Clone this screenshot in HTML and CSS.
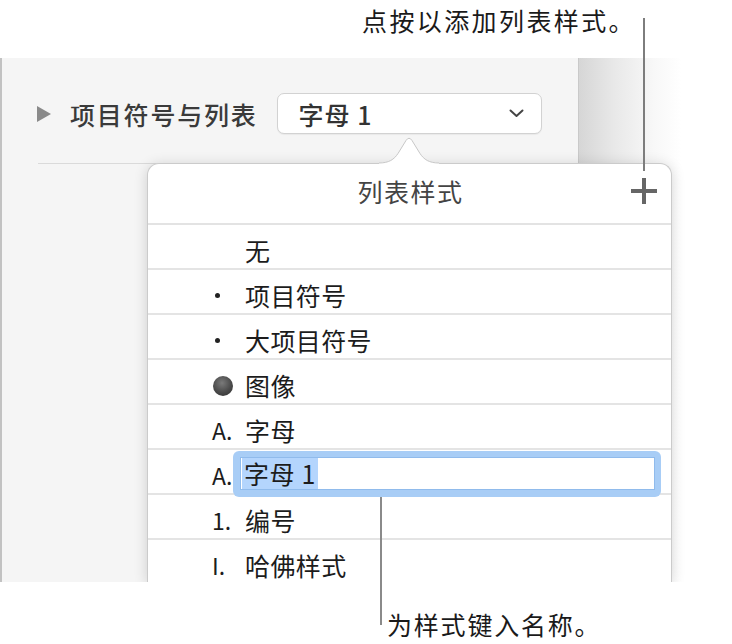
FILE: index.html
```html
<!DOCTYPE html>
<html lang="zh-CN">
<head>
<meta charset="utf-8">
<title>列表样式</title>
<link rel="stylesheet" href="styles.css">
</head>
<body>
<div class="page">
  <div class="top-note">点按以添加列表样式。</div>
  <div class="stage">
    <div class="sidebar">
      <div class="section-row">
        <span class="disclosure"></span>
        <span class="section-label">项目符号与列表</span>
        <div class="dropdown">
          <span class="dropdown-text">字母 1</span>
          <svg class="chevron" width="15" height="9" viewBox="0 0 15 9"><polyline points="1.5,1.5 7.5,7 13.5,1.5" fill="none" stroke="#444" stroke-width="2" stroke-linecap="round" stroke-linejoin="round"/></svg>
        </div>
      </div>
      <div class="divider"></div>
    </div>
    <div class="canvas"></div>
  </div>
  <div class="bottom-note">为样式键入名称。</div>

  <div class="popup">
    <div class="popup-header">
      <span></span>
      <span class="popup-title">列表样式</span>
      <svg class="plus" width="26" height="26" viewBox="0 0 26 26"><rect x="0" y="11" width="26" height="4" fill="#666"/><rect x="11" y="0" width="4" height="26" fill="#666"/></svg>
    </div>
    <div class="row"><span class="marker"></span><span class="name">无</span></div>
    <div class="row"><span class="marker"><span class="dot"></span></span><span class="name">项目符号</span></div>
    <div class="row"><span class="marker"><span class="dot"></span></span><span class="name">大项目符号</span></div>
    <div class="row"><span class="marker"><span class="image-bullet"></span></span><span class="name">图像</span></div>
    <div class="row"><span class="marker">A.</span><span class="name">字母</span></div>
    <div class="row editing">
      <span class="marker">A.</span>
      <div class="field"><div class="field-inner"><span class="selected">字母 1</span></div></div>
    </div>
    <div class="row"><span class="marker">1.</span><span class="name">编号</span></div>
    <div class="row"><span class="marker">I.</span><span class="name">哈佛样式</span></div>
  </div>

  <svg class="pointer" width="60" height="29" viewBox="0 0 60 29">
    <path d="M0,28 C10,28 15,24.5 19,18.5 L27,5.5 Q30,1 33,5.5 L41,18.5 C45,24.5 50,28 60,28 L60,29 L0,29 Z" fill="#fff"/>
    <path d="M0,28 C10,28 15,24.5 19,18.5 L27,5.5 Q30,1 33,5.5 L41,18.5 C45,24.5 50,28 60,28" fill="none" stroke="#c8c8c8" stroke-width="1"/>
  </svg>

  <div class="callout-line top-line"></div>
  <div class="callout-line bottom-line"></div>
</div>
</body>
</html>
```

FILE: styles.css
```css
* { box-sizing: border-box; }

html, body {
  margin: 0;
  padding: 0;
  background: #fff;
}

body {
  font-family: "Noto Sans CJK SC", "Noto Sans", "Liberation Sans", sans-serif;
  color: #1c1c1c;
}

.page {
  position: relative;
  width: 732px;
  height: 644px;
  overflow: hidden;
}

.top-note {
  height: 58px;
  padding-left: 362px;
  font-size: 25px;
  line-height: 40px;
  letter-spacing: 2.4px;
  color: #1a1a1a;
}

.stage {
  display: flex;
  height: 524px;
}

.sidebar {
  width: 578px;
  background: #f5f5f5;
  border-left: 2px solid #c2c2c2;
}

.section-row {
  display: flex;
  align-items: center;
  padding: 35px 0 0 35px;
}

.disclosure {
  width: 0;
  height: 0;
  border-top: 8px solid transparent;
  border-bottom: 8px solid transparent;
  border-left: 14px solid #8a8a8a;
  margin-right: 19px;
}

.section-label {
  font-size: 25px;
  font-weight: 500;
  letter-spacing: 1.8px;
  color: #3a3a3a;
  margin-right: 19px;
}

.dropdown {
  width: 265px;
  height: 41px;
  background: #fff;
  border: 1px solid #d2d2d2;
  border-radius: 7px;
  box-shadow: 0 1px 1px rgba(0, 0, 0, 0.05);
  display: flex;
  align-items: center;
  justify-content: space-between;
  padding: 0 17px 0 21px;
}

.dropdown-text {
  font-size: 25px;
  letter-spacing: 1px;
  color: #333;
  font-weight: 500;
}

.divider {
  margin: 29px 0 0 36px;
  height: 1px;
  background: #dadada;
}

.canvas {
  flex: 1;
  border-left: 1px solid #c9c9c9;
  background: linear-gradient(to right, #d6d6d6 0, #e8e8e8 35px, #f8f8f8 75px, #fff 102px, #fff 100%);
}

.bottom-note {
  height: 62px;
  padding: 25px 0 0 387px;
  font-size: 25px;
  line-height: 34px;
  letter-spacing: 1.8px;
  color: #1a1a1a;
}

.popup {
  position: absolute;
  left: 147px;
  top: 163px;
  width: 525px;
  height: 419px;
  background: #fff;
  border: 1px solid #cbcbcb;
  border-bottom: none;
  border-radius: 12px 12px 0 0;
  box-shadow: 0 2px 14px rgba(0, 0, 0, 0.16);
  clip-path: inset(-30px -30px 0 -30px);
}

.popup-header {
  height: 61px;
  display: grid;
  grid-template-columns: 1fr auto 1fr;
  align-items: center;
  border-bottom: 2px solid #e3e3e3;
}

.popup-title {
  font-size: 25px;
  letter-spacing: 1.5px;
  color: #444;
  padding-left: 2px;
  margin-top: -6px;
}

.plus {
  justify-self: end;
  margin-right: 14px;
  margin-top: -6px;
}

.row {
  position: relative;
  height: 45px;
  border-bottom: 2px solid #e4e4e4;
  display: flex;
  align-items: center;
  padding: 7px 0 0 64px;
  font-size: 25px;
}

.marker {
  width: 33px;
  flex: none;
  display: flex;
  align-items: center;
  font-size: 23px;
  color: #1c1c1c;
}

.name {
  letter-spacing: 0.4px;
  color: #1c1c1c;
}

.dot {
  display: block;
  width: 5px;
  height: 5px;
  border-radius: 50%;
  background: #222;
  margin-left: 3px;
}

.image-bullet {
  display: block;
  width: 20px;
  height: 20px;
  border-radius: 50%;
  background: radial-gradient(circle at 45% 35%, #7a7a7a 0, #4a4a4a 55%, #2c2c2c 100%);
  margin-left: 1px;
  margin-top: 2px;
}

.editing {
  z-index: 2;
}

.field {
  position: absolute;
  left: 85px;
  top: 1px;
  width: 428px;
  height: 46px;
  background: #a8cdf6;
  border-radius: 6px;
  padding: 6px 6px 7px 7px;
}

.field-inner {
  height: 100%;
  background: #fff;
  box-shadow: inset 0 0 0 1px #90bbec;
  display: flex;
  align-items: center;
  padding-left: 2px;
}

.selected {
  background: #b4d5fd;
  padding: 0 2px 0 2px;
  line-height: 31px;
  letter-spacing: 0.6px;
  font-size: 25px;
  color: #1c1c1c;
}

.pointer {
  position: absolute;
  left: 379px;
  top: 135px;
  z-index: 3;
}

.callout-line {
  position: absolute;
  width: 2px;
  background: #7d7d7d;
  z-index: 4;
}

.top-line {
  left: 643px;
  top: 18px;
  height: 153px;
}

.bottom-line {
  left: 380px;
  top: 497px;
  height: 128px;
  background: #8a8a8a;
}
```
